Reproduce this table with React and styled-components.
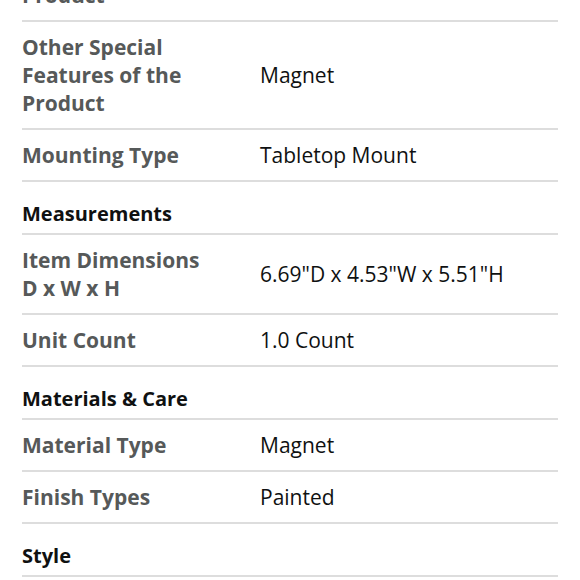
import React from 'react';
import styled, { createGlobalStyle } from 'styled-components';

const GlobalStyle = createGlobalStyle`
  html, body { margin: 0; padding: 0; background: #ffffff; }
  body {
    font-family: "Open Sans", "Liberation Sans", sans-serif;
    -webkit-font-smoothing: antialiased;
  }
`;

const Page = styled.div`
  padding: 0 22px;
  margin-top: -58px;
`;

const Section = styled.section`
  display: flex;
  flex-direction: column;
`;

const SectionTitle = styled.h3`
  margin: 0;
  padding: 18px 0 5px;
  font-size: 20px;
  line-height: 28px;
  font-weight: 700;
  color: #0f1111;
  border-bottom: 2px solid #dddddd;
`;

const Row = styled.div`
  display: grid;
  grid-template-columns: 185px 1fr;
  column-gap: 53px;
  align-items: center;
  padding: 11px 0;
  border-bottom: 2px solid #dddddd;
`;

const Label = styled.div`
  font-size: 21px;
  line-height: 28px;
  font-weight: 700;
  color: #565959;
`;

const Value = styled.div`
  font-size: 21px;
  line-height: 28px;
  font-weight: 400;
  color: #0f1111;
`;

const sections = [
  {
    title: null,
    rows: [
      ['Colour of the Product', 'Black'],
      ['Other Special Features of the Product', 'Magnet'],
      ['Mounting Type', 'Tabletop Mount'],
    ],
  },
  {
    title: 'Measurements',
    rows: [
      ['Item Dimensions D x W x H', '6.69"D x 4.53"W x 5.51"H'],
      ['Unit Count', '1.0 Count'],
    ],
  },
  {
    title: 'Materials & Care',
    rows: [
      ['Material Type', 'Magnet'],
      ['Finish Types', 'Painted'],
    ],
  },
  {
    title: 'Style',
    rows: [['Style', 'Modern']],
  },
];

export default function App() {
  return (
    <>
      <GlobalStyle />
      <Page>
        {sections.map((s, i) => (
          <Section key={i}>
            {s.title && <SectionTitle>{s.title}</SectionTitle>}
            {s.rows.map(([l, v]) => (
              <Row key={l}>
                <Label>{l}</Label>
                <Value>{v}</Value>
              </Row>
            ))}
          </Section>
        ))}
      </Page>
    </>
  );
}
